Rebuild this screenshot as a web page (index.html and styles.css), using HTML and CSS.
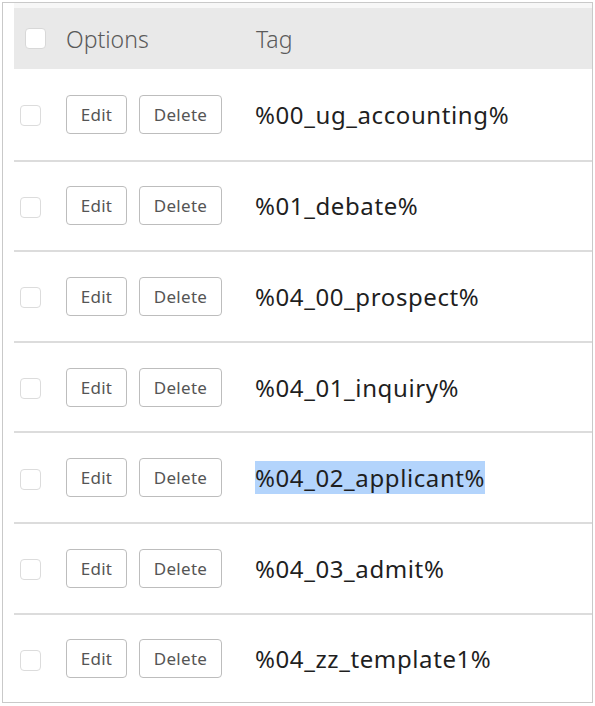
FILE: index.html
```html
<!DOCTYPE html>
<html>
<head>
<meta charset="utf-8">
<link rel="stylesheet" href="styles.css">
</head>
<body>
<div class="frame">
  <div class="table">
    <div class="head">
      <span class="cb cb-head"></span>
      <span class="col-opt">Options</span>
      <span class="col-tag">Tag</span>
    </div>
    <div class="row"><span class="cb"></span><span class="opts"><button class="btn btn-edit">Edit</button><button class="btn btn-del">Delete</button></span><span class="tag">%00_ug_accounting%</span></div>
    <div class="row"><span class="cb"></span><span class="opts"><button class="btn btn-edit">Edit</button><button class="btn btn-del">Delete</button></span><span class="tag">%01_debate%</span></div>
    <div class="row"><span class="cb"></span><span class="opts"><button class="btn btn-edit">Edit</button><button class="btn btn-del">Delete</button></span><span class="tag">%04_00_prospect%</span></div>
    <div class="row"><span class="cb"></span><span class="opts"><button class="btn btn-edit">Edit</button><button class="btn btn-del">Delete</button></span><span class="tag">%04_01_inquiry%</span></div>
    <div class="row"><span class="cb"></span><span class="opts"><button class="btn btn-edit">Edit</button><button class="btn btn-del">Delete</button></span><span class="tag"><span class="sel">%04_02_applicant%</span></span></div>
    <div class="row"><span class="cb"></span><span class="opts"><button class="btn btn-edit">Edit</button><button class="btn btn-del">Delete</button></span><span class="tag">%04_03_admit%</span></div>
    <div class="row"><span class="cb"></span><span class="opts"><button class="btn btn-edit">Edit</button><button class="btn btn-del">Delete</button></span><span class="tag">%04_zz_template1%</span></div>
  </div>
</div>
</body>
</html>
```

FILE: styles.css
```css
html, body {
  margin: 0;
  padding: 0;
  background: #ffffff;
}
body {
  padding: 2px;
  font-family: "Noto Sans", "Open Sans", sans-serif;
}
.frame {
  width: 589px;
  height: 699px;
  border: 1px solid #c9c9c9;
  box-sizing: content-box;
  background: #ffffff;
  overflow: hidden;
}
.table {
  margin-left: 11px;
  border-top: 5px solid #f7f7f7;
  display: flex;
  flex-direction: column;
}
.head {
  height: 61px;
  background: #e9e9e9;
  display: flex;
  align-items: center;
}
.head .cb-head {
  margin-left: 11px;
  margin-top: 0px;
  border-color: #d8d8d8;
}
.col-opt {
  margin-left: 20px;
  width: 190px;
  font-size: 23px;
  color: #5a5a5a;
  font-weight: 300;
}
.col-tag {
  font-size: 23px;
  color: #5a5a5a;
  font-weight: 300;
}
.cb {
  display: inline-block;
  width: 19px;
  height: 19px;
  border: 1px solid #dcdcdc;
  border-radius: 4px;
  background: #ffffff;
  box-sizing: content-box;
  flex: none;
}
.row {
  height: 90.6px;
  box-sizing: border-box;
  border-top: 2px solid #dcdcdc;
  display: flex;
  align-items: center;
}
.head + .row {
  border-top: none;
}
.row .cb {
  margin-left: 6px;
  margin-top: 3px;
}
.opts {
  display: flex;
  gap: 12px;
  margin-left: 25px;
  width: 189px;
}
.btn {
  height: 39px;
  box-sizing: border-box;
  border: 1.5px solid #bdbdbd;
  border-radius: 4px;
  background: #ffffff;
  color: #555555;
  font-family: "Noto Sans", "Open Sans", sans-serif;
  font-size: 17px;
  letter-spacing: 0.3px;
  padding: 0;
  margin: 0;
}
.btn-edit { width: 61px; }
.btn-del { width: 83px; }
.tag {
  font-size: 24px;
  letter-spacing: 0.6px;
  color: #1f1f1f;
}
.sel {
  background: #b3d4fc;
}
```
